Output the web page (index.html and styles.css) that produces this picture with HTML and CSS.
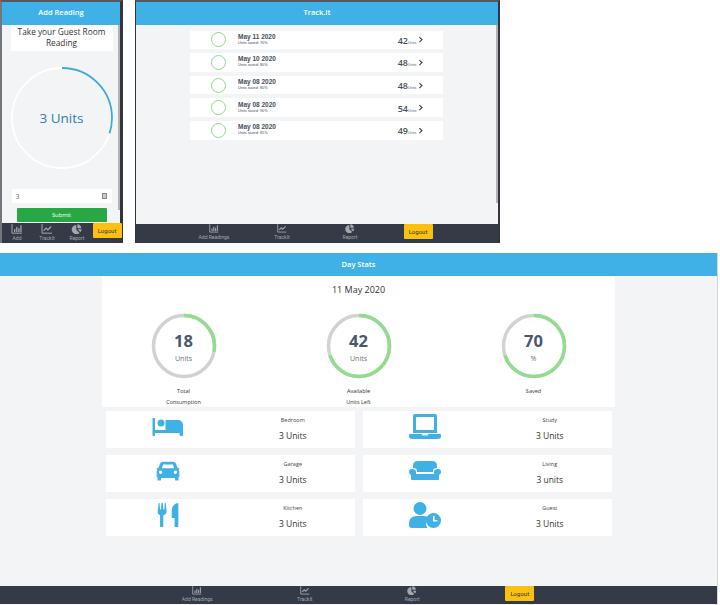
FILE: index.html
```html
<!DOCTYPE html>
<html lang="en">
<head>
  <meta charset="UTF-8" />
  <meta name="viewport" content="width=device-width, initial-scale=1.0"/>
  <title>Track.It</title>
  <link rel="stylesheet" href="styles.css">
</head>
<body>

  <svg class="defs" width="0" height="0">
    <symbol id="i-bars" viewBox="0 0 14 12">
      <path d="M1 0v11h12" fill="none" stroke="currentColor" stroke-width="1.2"/>
      <path d="M3.5 6h1.5v3.5H3.500zM6 3.500h1.500v6H6zM8.500 5h1.500v4.500H8.500zM11 1.500h1.500v8H11z" fill="currentColor"/>
    </symbol>
    <symbol id="i-line" viewBox="0 0 14 12">
      <path d="M1 0v11h12" fill="none" stroke="currentColor" stroke-width="1.2"/>
      <path d="M3 8l3-3 2 2 4-4" fill="none" stroke="currentColor" stroke-width="1.500"/>
    </symbol>
    <symbol id="i-pie" viewBox="0 0 14 14">
      <path d="M6 1.500v6.500l4.500 4.500A6.400 6.400 0 1 1 6 1.500z" fill="currentColor"/>
      <path d="M7.500 0.500a6 6 0 0 1 5.500 5.500H7.500z" fill="currentColor"/>
      <path d="M8 7.500h5.500a6 6 0 0 1-1.800 4z" fill="currentColor"/>
    </symbol>
  </svg>

  <!-- phone window -->
  <section class="window window-phone">
    <header class="topbar">Add Reading</header>
    <div class="window-body phone-body">
      <h2 class="reading-title">Take your Guest Room Reading</h2>
      <div class="dial">
        <svg viewBox="0 0 102 102" width="102" height="102">
          <circle cx="51" cy="51" r="50" fill="none" stroke="#fff" stroke-width="1.800"/>
          <circle cx="51" cy="51" r="50" fill="none" stroke="#3fa9dc" stroke-width="1.800" pathLength="100" stroke-dasharray="30 70" transform="rotate(-90 51 51)"/>
        </svg>
        <span class="dial-value">3 Units</span>
      </div>
      <div class="reading-input">
        <span>3</span>
        <span class="spinner"></span>
      </div>
      <button class="submit" type="button">Submit</button>
      <span class="scrollbar"></span>
    </div>
    <nav class="bottomnav nav-phone">
      <a class="navitem"><svg class="navicon"><use href="#i-bars"/></svg>Add</a>
      <a class="navitem"><svg class="navicon"><use href="#i-line"/></svg>TrackIt</a>
      <a class="navitem"><svg class="navicon"><use href="#i-pie"/></svg>Report</a>
      <a class="logout">Logout</a>
    </nav>
  </section>

  <!-- tablet window -->
  <section class="window window-tablet">
    <header class="topbar">Track.It</header>
    <div class="window-body">
      <ul class="history">
        <li class="history-row">
          <span class="ring"></span>
          <div class="history-text"><strong>May 11 2020</strong><small>Units saved: 70%</small></div>
          <div class="history-value">42<small>Units</small><i class="chev"></i></div>
        </li>
        <li class="history-row">
          <span class="ring"></span>
          <div class="history-text"><strong>May 10 2020</strong><small>Units saved: 80%</small></div>
          <div class="history-value">48<small>Units</small><i class="chev"></i></div>
        </li>
        <li class="history-row">
          <span class="ring"></span>
          <div class="history-text"><strong>May 08 2020</strong><small>Units saved: 80%</small></div>
          <div class="history-value">48<small>Units</small><i class="chev"></i></div>
        </li>
        <li class="history-row">
          <span class="ring"></span>
          <div class="history-text"><strong>May 08 2020</strong><small>Units saved: 90%</small></div>
          <div class="history-value">54<small>Units</small><i class="chev"></i></div>
        </li>
        <li class="history-row">
          <span class="ring"></span>
          <div class="history-text"><strong>May 08 2020</strong><small>Units saved: 81%</small></div>
          <div class="history-value">49<small>Units</small><i class="chev"></i></div>
        </li>
      </ul>
      <span class="scrollbar"></span>
    </div>
    <nav class="bottomnav nav-tablet">
      <a class="navitem"><svg class="navicon"><use href="#i-bars"/></svg>Add Readings</a>
      <a class="navitem"><svg class="navicon"><use href="#i-line"/></svg>TrackIt</a>
      <a class="navitem"><svg class="navicon"><use href="#i-pie"/></svg>Report</a>
      <a class="logout">Logout</a>
    </nav>
  </section>

  <!-- desktop window -->
  <section class="window window-desktop">
    <header class="topbar">Day Stats</header>
    <div class="window-body">
      <div class="summary">
        <h2 class="summary-date">11 May 2020</h2>
        <div class="stats">
          <div class="stat">
            <div class="gauge">
              <svg viewBox="0 0 66 66" width="66" height="66">
                <circle cx="33" cy="33" r="30.500" fill="none" stroke="#d2d2d2" stroke-width="3.500"/>
                <circle cx="33" cy="33" r="30.500" fill="none" stroke="#93dc8e" stroke-width="3.500" pathLength="100" stroke-dasharray="28 72" transform="rotate(-90 33 33)"/>
              </svg>
              <div class="gauge-text"><b>18</b><span>Units</span></div>
            </div>
            <p class="stat-label">Total<br>Consumption</p>
          </div>
          <div class="stat">
            <div class="gauge">
              <svg viewBox="0 0 66 66" width="66" height="66">
                <circle cx="33" cy="33" r="30.500" fill="none" stroke="#d2d2d2" stroke-width="3.500"/>
                <circle cx="33" cy="33" r="30.500" fill="none" stroke="#93dc8e" stroke-width="3.500" pathLength="100" stroke-dasharray="70 30" transform="rotate(-90 33 33)"/>
              </svg>
              <div class="gauge-text"><b>42</b><span>Units</span></div>
            </div>
            <p class="stat-label">Available<br>Units Left</p>
          </div>
          <div class="stat">
            <div class="gauge">
              <svg viewBox="0 0 66 66" width="66" height="66">
                <circle cx="33" cy="33" r="30.500" fill="none" stroke="#d2d2d2" stroke-width="3.500"/>
                <circle cx="33" cy="33" r="30.500" fill="none" stroke="#93dc8e" stroke-width="3.500" pathLength="100" stroke-dasharray="70 30" transform="rotate(-90 33 33)"/>
              </svg>
              <div class="gauge-text"><b>70</b><span>%</span></div>
            </div>
            <p class="stat-label">Saved</p>
          </div>
        </div>
      </div>

      <div class="rooms">
        <div class="room">
          <svg class="room-icon" viewBox="0 0 32 20" width="32" height="20">
            <rect x="0.500" y="1" width="2.500" height="18" rx="0.800"/>
            <circle cx="9" cy="6" r="3.500"/>
            <path d="M13.500 3H26a5 5 0 0 1 5 5v10a1 1 0 0 1-1 1h-1.500a1 1 0 0 1-1-1v-2H3v-3h10.500z"/>
          </svg>
          <div class="room-info"><span>Bedroom</span><strong>3 Units</strong></div>
        </div>
        <div class="room">
          <svg class="room-icon" viewBox="0 0 32 25" width="32" height="25">
            <path fill-rule="evenodd" d="M6 0h20q2 0 2 2v17H4V2q0-2 2-2zm1 3v13h18V3z"/>
            <path d="M1 20h11.500l1 1.500h5l1-1.500H31q1 0 1 1v1q0 3-3 3H3q-3 0-3-3v-1q0-1 1-1z"/>
          </svg>
          <div class="room-info"><span>Study</span><strong>3 Units</strong></div>
        </div>
        <div class="room">
          <svg class="room-icon" viewBox="0 0 32 24" width="28" height="21">
            <path fill-rule="evenodd" d="M10 2h12q2 0 3 2l2 5 2 .5-.5 1.500-.5.500q1 1 1 3v4q0 1-1 1v3q0 1-1 1h-2q-1 0-1-1v-2H8v2q0 1-1 1H5q-1 0-1-1v-3q-1 0-1-1v-4q0-2 1-3l-.5-.5L3 9.500 5 9l2-5q1-2 3-2zm.500 3L9 9.500h14L21.500 5zM7.500 12a2 2 0 1 0 0 4 2 2 0 0 0 0-4zm17 0a2 2 0 1 0 0 4 2 2 0 0 0 0-4z"/>
          </svg>
          <div class="room-info"><span>Garage</span><strong>3 Units</strong></div>
        </div>
        <div class="room">
          <svg class="room-icon" viewBox="0 0 32 19" width="32" height="19">
            <path d="M4 7V5q0-5 5-5h14q5 0 5 5v2q-4 0-4 3v1H8v-1q0-3-4-3z"/>
            <path d="M3 8q4 0 4 3v2h18v-2q0-3 4-3 3 0 3 3 0 2-2 3v4q0 1-1 1H3q-1 0-1-1v-4q-2-1-2-3 0-3 3-3z"/>
          </svg>
          <div class="room-info"><span>Living</span><strong>3 units</strong></div>
        </div>
        <div class="room">
          <svg class="room-icon" viewBox="0 0 32 26" width="30" height="24.400">
            <path d="M6 0h1l.500 7h1L9 0h1.500L11 7h1l.500-7h1l1 9q0 3-3.500 4v11.500q0 1.500-1.500 1.500H9q-1.500 0-1.500-1.500V13Q4.500 12 5 9z"/>
            <path d="M26 0q1 0 1 1v23.500q0 1.500-1.500 1.500h-1q-1.500 0-1.500-1.500V16h-3V8q0-6 6-8z"/>
          </svg>
          <div class="room-info"><span>Kitchen</span><strong>3 Units</strong></div>
        </div>
        <div class="room">
          <svg class="room-icon" viewBox="0 0 32 26" width="32" height="26">
            <circle cx="11" cy="6.500" r="6.500"/>
            <path d="M3 26q-3 0-3-3v-2q0-6 7-7h8q3 0 5 1.500-3 3-3 6.500 0 2 1.500 4z"/>
            <path fill-rule="evenodd" d="M24.500 11a7.500 7.500 0 1 1 0 15 7.500 7.500 0 0 1 0-15zM24 14v5.500h4.500V18H25.500v-4z"/>
          </svg>
          <div class="room-info"><span>Guest</span><strong>3 Units</strong></div>
        </div>
      </div>
    </div>
    <nav class="bottomnav nav-desktop">
      <a class="navitem"><svg class="navicon"><use href="#i-bars"/></svg>Add Readings</a>
      <a class="navitem"><svg class="navicon"><use href="#i-line"/></svg>TrackIt</a>
      <a class="navitem"><svg class="navicon"><use href="#i-pie"/></svg>Report</a>
      <a class="logout">Logout</a>
    </nav>
  </section>

</body>
</html>
```

FILE: styles.css
```css
* {
  box-sizing: border-box;
}

html, body {
  height: 100%;
}

body {
  margin: 0;
  background: #fff;
  color: #333;
  font-family: "Open Sans", Arial, sans-serif;
  overflow: hidden;
  position: relative;
}

.defs {
  position: absolute;
}

/* the three screenshots sit on a free canvas */
.window {
  position: absolute;
  display: flex;
  flex-direction: column;
  background: #f2f4f6;
}

.window-phone {
  left: 0;
  top: 0;
  width: 123px;
  height: 243px;
  border-top: 2px solid #55595f;
  border-left: 2px solid #73777c;
  border-right: 3px solid #33363b;
}

.window-tablet {
  left: 135px;
  top: 0;
  width: 365px;
  height: 243px;
  border-top: 2px solid #55595f;
  border-left: 1px solid #33363b;
  border-right: 2px solid #33363b;
}

.window-desktop {
  left: 0;
  top: 253px;
  width: 718px;
  height: 352px;
  border-right: 1px solid #d4d5d8;
}

.topbar {
  height: 23px;
  flex: none;
  background: #3fb1e7;
  color: #fff;
  font-size: 7.500px;
  font-weight: 600;
  line-height: 21px;
  text-align: center;
}

.window-desktop .topbar {
  line-height: 22px;
}

.window-body {
  position: relative;
  flex: 1;
  min-height: 0;
}

.scrollbar {
  position: absolute;
  top: 0;
  right: 0;
  width: 2px;
  height: 178px;
  background: #b0b2b6;
}

.phone-body .scrollbar {
  height: 185px;
}

/* bottom nav */
.bottomnav {
  height: 19px;
  flex: none;
  display: grid;
  justify-content: center;
  background: #343a46;
}

.window-desktop .bottomnav {
  margin-bottom: 1px;
  height: 18px;
}

.nav-phone {
  grid-template-columns: repeat(4, 30px);
  justify-content: start;
  height: 20px;
}

.nav-tablet {
  grid-template-columns: repeat(4, 68px);
  padding-right: 2px;
}

.nav-desktop {
  grid-template-columns: repeat(4, 107.5px);
}

.navitem {
  display: flex;
  flex-direction: column;
  align-items: center;
  color: #a3a7ae;
  font-family: Roboto, Arial, sans-serif;
  font-size: 5px;
  line-height: 7px;
  white-space: nowrap;
}

.navicon {
  width: 10px;
  height: 9px;
  margin-bottom: 1px;
  flex: none;
}

.nav-phone .navicon {
  width: 12px;
  height: 10px;
  margin-top: 1px;
}

.logout {
  justify-self: center;
  width: 29px;
  height: 15px;
  background: #fcc010;
  border-radius: 1px;
  color: #333;
  font-family: Roboto, Arial, sans-serif;
  font-size: 6px;
  line-height: 15px;
  text-align: center;
}

/* add reading */
.phone-body {
  display: flex;
  flex-direction: column;
  align-items: center;
}

.reading-title {
  width: 102px;
  height: 26px;
  margin: 0 0 16px 1px;
  padding: 1px 4px 0;
  background: #fff;
  color: #333;
  font-size: 8.300px;
  font-weight: 400;
  line-height: 11px;
  text-align: center;
}

.dial {
  position: relative;
  width: 102px;
  height: 102px;
  margin-left: 1px;
}

.dial-value {
  position: absolute;
  inset: 0;
  display: flex;
  align-items: center;
  justify-content: center;
  color: #2a7fb5;
  font-size: 13.500px;
}

.reading-input {
  display: flex;
  align-items: center;
  justify-content: space-between;
  width: 100px;
  height: 14px;
  margin-top: 20px;
  margin-left: 1px;
  padding: 0 5px 0 4px;
  background: #fff;
  color: #666;
  font-size: 7px;
}

.spinner {
  width: 5px;
  height: 6px;
  background: #ccc;
  border: 1px solid #888;
}

.submit {
  width: 90px;
  height: 14px;
  margin-top: 5px;
  margin-left: 1px;
  padding: 0;
  border: none;
  border-radius: 1px;
  background: #28a745;
  color: #fff;
  font-family: inherit;
  font-size: 5.800px;
}

/* track.it */
.history {
  list-style: none;
  margin: 5.500px 0 0 54px;
  padding: 0;
  width: 253px;
}

.history-row {
  display: flex;
  align-items: center;
  height: 18.700px;
  margin-bottom: 3.900px;
  padding: 0 22px 0 21px;
  background: #fff;
}

.ring {
  width: 15px;
  height: 15px;
  flex: none;
  border: 1px solid #93d68e;
  border-radius: 50%;
}

.history-text {
  display: flex;
  flex-direction: column;
  margin-left: 12px;
  margin-top: -1px;
  color: #47505e;
  font-family: "Liberation Sans", Arial, sans-serif;
}

.history-text strong {
  font-size: 6.500px;
  line-height: 7px;
}

.history-text small {
  font-size: 3.800px;
  line-height: 6px;
}

.history-value {
  display: flex;
  align-items: baseline;
  margin-left: auto;
  margin-top: 1px;
  color: #47505e;
  font-family: "Open Sans", Arial, sans-serif;
  font-size: 9px;
  font-weight: 600;
}

.history-value small {
  font-size: 3.500px;
  font-weight: 400;
}

.chev {
  width: 3.500px;
  height: 3.500px;
  margin-left: 1px;
  border-top: 1px solid #333;
  border-right: 1px solid #333;
  transform: translateY(-2.500px) rotate(45deg);
}

/* day stats */
.summary {
  width: 513px;
  height: 131px;
  margin: 0 0 0 102px;
  background: #fff;
}

.summary-date {
  margin: 0;
  padding-top: 7px;
  color: #333;
  font-size: 9px;
  font-weight: 400;
  line-height: 14px;
  text-align: center;
}

.stats {
  display: grid;
  grid-template-columns: repeat(3, 175px);
  justify-content: center;
  margin-top: 16px;
}

.stat {
  display: flex;
  flex-direction: column;
  align-items: center;
}

.gauge {
  position: relative;
  width: 66px;
  height: 66px;
}

.gauge-text {
  position: absolute;
  inset: 0;
  display: flex;
  flex-direction: column;
  align-items: center;
  padding-top: 17px;
}

.gauge-text b {
  color: #47586f;
  font-size: 16.500px;
  font-weight: 700;
  line-height: 22px;
}

.gauge-text span {
  margin-top: 2px;
  color: #6b7480;
  font-size: 7px;
  line-height: 10px;
}

.stat-label {
  margin: 7px 0 0;
  color: #333;
  font-size: 5.500px;
  line-height: 10.500px;
  text-align: center;
}

.rooms {
  display: grid;
  grid-template-columns: 249px 249px;
  grid-auto-rows: 36.700px;
  column-gap: 8px;
  row-gap: 7.300px;
  margin: 4px 0 0 106px;
}

.room {
  display: grid;
  grid-template-columns: 1fr 1fr;
  align-items: center;
  background: #fff;
}

.room-icon {
  justify-self: center;
  margin-bottom: 5px;
  fill: #3fb1e7;
}

.room-info {
  display: flex;
  flex-direction: column;
  align-items: center;
}

.room-info span {
  color: #444;
  font-size: 5.500px;
  line-height: 8px;
}

.room-info strong {
  margin-top: 6px;
  color: #333;
  font-size: 8.500px;
  font-weight: 400;
  line-height: 12px;
}
```
